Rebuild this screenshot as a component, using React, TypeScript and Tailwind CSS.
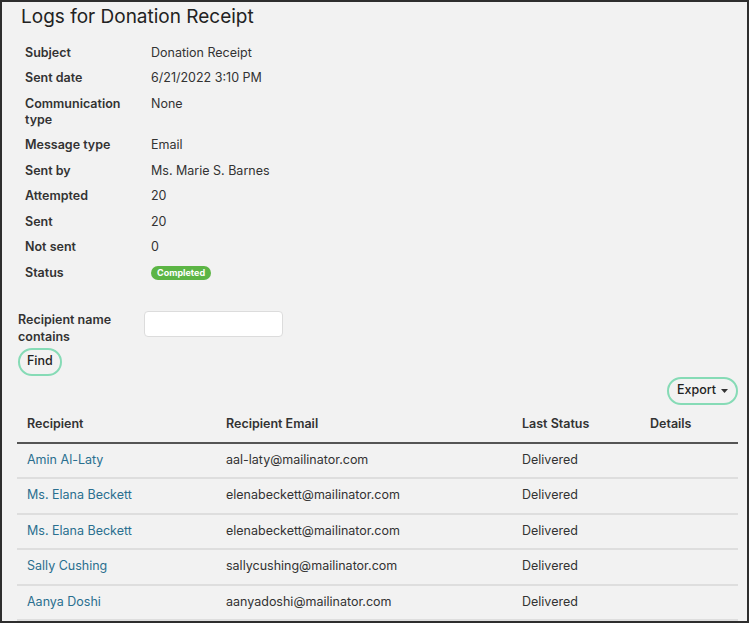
import React from 'react';

const details: { label: string; value: React.ReactNode }[] = [
  { label: 'Subject', value: 'Donation Receipt' },
  { label: 'Sent date', value: '6/21/2022 3:10 PM' },
  { label: 'Communication type', value: 'None' },
  { label: 'Message type', value: 'Email' },
  { label: 'Sent by', value: 'Ms. Marie S. Barnes' },
  { label: 'Attempted', value: '20' },
  { label: 'Sent', value: '20' },
  { label: 'Not sent', value: '0' },
];

const rows = [
  { name: 'Amin Al-Laty', email: 'aal-laty@mailinator.com' },
  { name: 'Ms. Elana Beckett', email: 'elenabeckett@mailinator.com' },
  { name: 'Ms. Elana Beckett', email: 'elenabeckett@mailinator.com' },
  { name: 'Sally Cushing', email: 'sallycushing@mailinator.com' },
  { name: 'Aanya Doshi', email: 'aanyadoshi@mailinator.com' },
];

export default function App() {
  return (
    <div
      className="w-[749px] h-[623px] overflow-hidden bg-[#f2f2f2] border-2 border-[#2e2e2e] text-[#333] text-[12.5px]"
      style={{ fontFamily: 'Inter, "Noto Sans", sans-serif' }}
    >
      <div className="pl-[19px] pr-[9px] pt-[1px]">
        <h1 className="text-[19px] leading-[28px] text-[#222]">Logs for Donation Receipt</h1>

        <div className="mt-[9px] pl-[4px] flex flex-col">
          {details.map((d) => (
            <div key={d.label} className="flex py-[4.75px]">
              <div className="w-[126px] pr-[14px] font-semibold leading-[16px] text-[#333]">{d.label}</div>
              <div className="leading-[16px] text-[#333]">{d.value}</div>
            </div>
          ))}
          <div className="flex py-[4.75px]">
            <div className="w-[126px] font-semibold leading-[16px]">Status</div>
            <div className="flex items-center">
              <span className="inline-flex items-center h-[14px] px-[6px] rounded-full bg-[#5cb545] text-white text-[9px] font-bold">
                Completed
              </span>
            </div>
          </div>
        </div>

        <div className="mt-[23px] flex items-start">
          <label className="w-[126px] -ml-[3px] font-semibold leading-[17px] pt-[2px]">
            Recipient name
            <br />
            contains
          </label>
          <input
            type="text"
            className="mt-[2px] w-[139px] h-[26px] bg-white border border-[#dcdcdc] rounded-[4px]"
          />
        </div>
        <button className="mt-[3px] -ml-[3px] h-[28px] px-[7px] rounded-full border-2 border-[#86dbb6] bg-transparent font-medium text-[#222]">
          Find
        </button>

        <div className="flex justify-end mt-[1px]">
          <button className="h-[28px] px-[8px] rounded-full border-2 border-[#86dbb6] font-medium text-[#222] flex items-center gap-[5px]">
            Export
            <svg width="7" height="4" viewBox="0 0 7 4">
              <path d="M0 0h7L3.5 4z" fill="#333" />
            </svg>
          </button>
        </div>

        <table className="mt-[2px] -ml-[4px] w-[721px] border-collapse">
          <thead>
            <tr className="border-b-2 border-[#555]">
              <th className="w-[209px] pl-[10px] h-[36px] text-left font-semibold">Recipient</th>
              <th className="w-[296px] text-left font-semibold">Recipient Email</th>
              <th className="w-[128px] text-left font-semibold">Last Status</th>
              <th className="text-left font-semibold">Details</th>
            </tr>
          </thead>
          <tbody>
            {rows.map((r, i) => (
              <tr key={i} className="border-b-2 border-[#dedede]">
                <td className="pl-[10px] h-[35.5px] text-[#2a6f8f]">{r.name}</td>
                <td>{r.email}</td>
                <td>Delivered</td>
                <td></td>
              </tr>
            ))}
          </tbody>
        </table>
      </div>
    </div>
  );
}
